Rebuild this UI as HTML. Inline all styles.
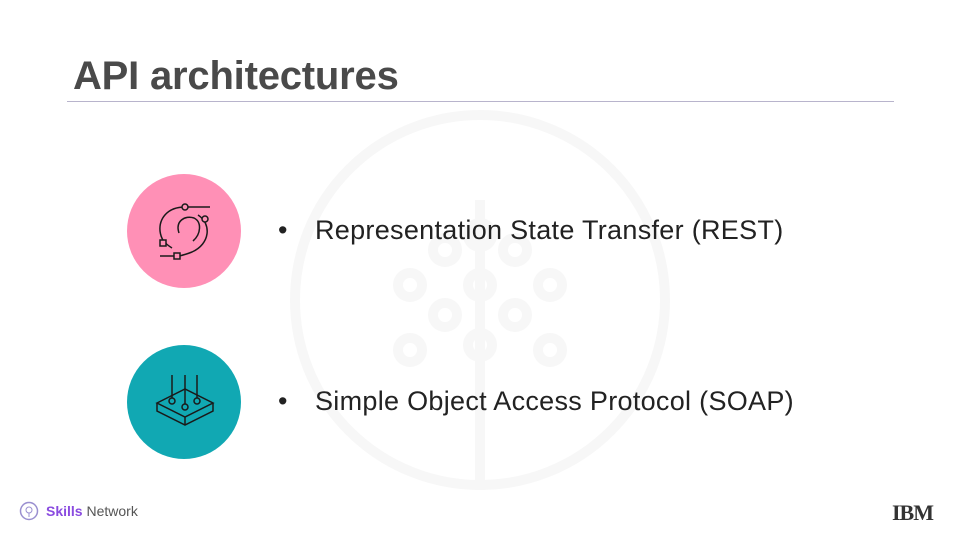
<!DOCTYPE html>
<html><head><meta charset="utf-8"><style>
body{margin:0;width:960px;height:540px;background:#fff;position:relative;overflow:hidden;font-family:"Liberation Sans",sans-serif}
.t{position:absolute;left:73px;top:54px;font-size:40px;font-weight:bold;color:#4a4a4a;letter-spacing:-0.2px}
.line{position:absolute;left:67px;top:101px;width:827px;height:1px;background:#b8b4cc}
.c{position:absolute;width:114px;height:114px;border-radius:50%}
.b{position:absolute;font-size:27px;color:#222;letter-spacing:0.3px}
</style></head><body>
<svg style="position:absolute;left:0;top:0" width="960" height="540">
<g fill="none" stroke="#f7f7f7" stroke-width="10">
<circle cx="480" cy="300" r="185"/>
<line x1="480" y1="200" x2="480" y2="490"/>
<circle cx="480" cy="235" r="12"/><circle cx="480" cy="285" r="12"/><circle cx="480" cy="345" r="12"/>
<circle cx="410" cy="285" r="12"/><circle cx="550" cy="285" r="12"/>
<circle cx="445" cy="315" r="12"/><circle cx="515" cy="315" r="12"/>
<circle cx="410" cy="350" r="12"/><circle cx="550" cy="350" r="12"/>
<circle cx="445" cy="250" r="12"/><circle cx="515" cy="250" r="12"/>
</g></svg>
<div class="t">API architectures</div>
<div class="line"></div>
<div class="c" style="left:127px;top:174px;background:#ff90b6"></div>
<div class="c" style="left:127px;top:345px;background:#11a8b3"></div>
<svg style="position:absolute;left:127px;top:174px" width="114" height="114" fill="none" stroke="#1a1a1a" stroke-width="1.5">
<path d="M58 33 H83"/><path d="M58 33 C40 33 32 45 33 57 C34 65 37 69 45 74"/>
<path d="M71 41 C85 50 83 70 65 78 C60 80 55 82 50 82 H33"/>
<path d="M52 59 C48 47 58 41 67 44 C75 48 74 60 66 67"/>
<circle cx="58" cy="33" r="3" fill="#ff90b6"/><circle cx="78" cy="45" r="3" fill="#ff90b6"/>
<rect x="33" y="66" width="6" height="6" fill="#ff90b6"/><rect x="47" y="79" width="6" height="6" fill="#ff90b6"/>
</svg>
<svg style="position:absolute;left:127px;top:345px" width="114" height="114" fill="none" stroke="#1a1a1a" stroke-width="1.5">
<path d="M30 58 L58 44 L86 58 L58 72 Z"/><path d="M30 58 V66 L58 80 L86 66 V58"/><path d="M58 72 V80"/>
<path d="M45 30 V53 M58 30 V60 M70 30 V53"/>
<circle cx="45" cy="56" r="3" fill="#11a8b3"/><circle cx="58" cy="62" r="3" fill="#11a8b3"/><circle cx="70" cy="56" r="3" fill="#11a8b3"/>
</svg>
<div class="b" style="left:278px;top:215px">•</div>
<div class="b" style="left:315px;top:215px">Representation State Transfer (REST)</div>
<div class="b" style="left:278px;top:386px">•</div>
<div class="b" style="left:315px;top:386px">Simple Object Access Protocol (SOAP)</div>
<svg style="position:absolute;left:19px;top:501px" width="20" height="20"><circle cx="10" cy="10" r="8.5" fill="none" stroke="#9a8fd0" stroke-width="1.5"/><circle cx="10" cy="9" r="3" fill="none" stroke="#9a8fd0"/><line x1="10" y1="12" x2="10" y2="16" stroke="#9a8fd0"/></svg>
<div style="position:absolute;left:46px;top:503px;font-size:14px;font-weight:bold"><span style="color:#8a4be0">Skills</span> <span style="color:#555;font-weight:normal">Network</span></div>
<div style="position:absolute;left:892px;top:500px;font-size:22px;font-weight:bold;color:#333;letter-spacing:-1px;font-family:'Liberation Serif',serif">IBM</div>
</body></html>
